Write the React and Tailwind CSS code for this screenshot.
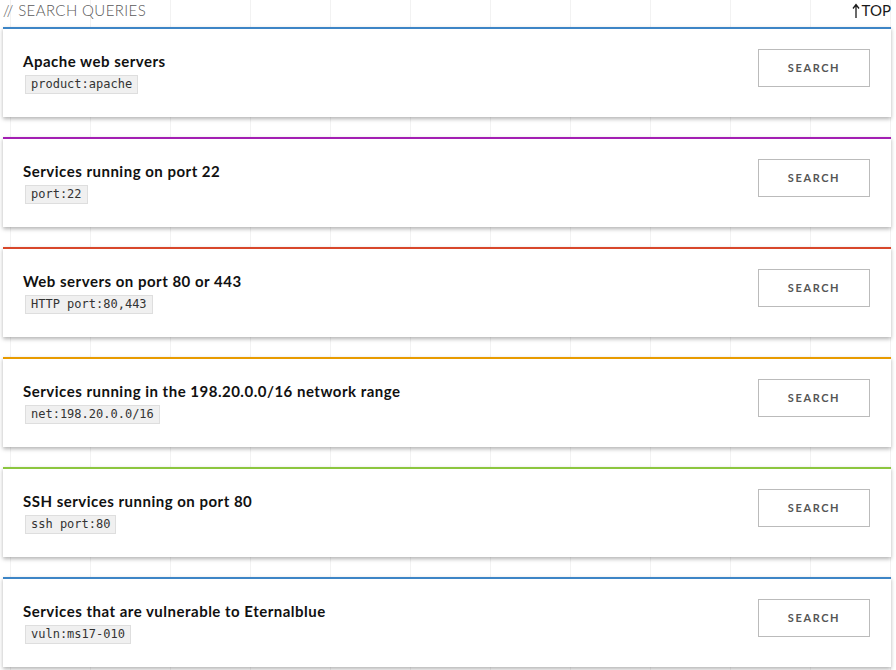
import React from "react";

const items = [
  { title: "Apache web servers", query: "product:apache", color: "border-[#3d85c6]" },
  { title: "Services running on port 22", query: "port:22", color: "border-[#a31fb3]" },
  { title: "Web servers on port 80 or 443", query: "HTTP port:80,443", color: "border-[#d8472b]" },
  { title: "Services running in the 198.20.0.0/16 network range", query: "net:198.20.0.0/16", color: "border-[#e89b00]" },
  { title: "SSH services running on port 80", query: "ssh port:80", color: "border-[#8cc63f]" },
  { title: "Services that are vulnerable to Eternalblue", query: "vuln:ms17-010", color: "border-[#3d85c6]" },
];

export default function App() {
  return (
    <div className="w-[896px] h-[670px] overflow-hidden bg-white bg-[linear-gradient(to_right,#f2f2f2_1px,transparent_1px)] bg-[size:80px_80px] bg-[position:10px_0]">
      <div className="ml-[3px] w-[888px]">
        <div className="h-[27px] flex justify-between items-start font-['Lato',sans-serif] text-[15px] leading-[20px]">
          <span className="font-light text-[#5a5a5a] tracking-[0.4px]">// SEARCH QUERIES</span>
          <span className="text-[#1a1a1a] flex items-center">
            <svg width="8" height="16" viewBox="0 0 8 16" className="mr-[2px] mt-[2px]" aria-hidden="true">
              <path d="M4 15V2M1 5.5L4 1.5L7 5.5" fill="none" stroke="#1a1a1a" strokeWidth="1.3" />
            </svg>
            TOP
          </span>
        </div>
        <div className="flex flex-col gap-[20px]">
          {items.map((it, i) => (
            <div
              key={i}
              className={`h-[90px] bg-white border-t-2 ${it.color} shadow-[0_2px_4px_rgba(0,0,0,0.3)] flex justify-between items-start pl-[20px] pr-[21px]`}
            >
              <div className="pt-[22px] flex flex-col items-start">
                <div className="font-['Lato',sans-serif] font-bold text-[15px] leading-[20px] tracking-[0.5px] text-[#111]">
                  {it.title}
                </div>
                <code className="mt-[4px] ml-[2px] block bg-[#f0f0f0] border border-[#dedede] px-[5px] font-['DejaVu_Sans_Mono',monospace] text-[12px] leading-[17px] text-[#333]">
                  {it.query}
                </code>
              </div>
              <button className="mt-[20px] w-[112px] h-[38px] border border-[#bbbbbb] bg-white font-['Lato',sans-serif] font-bold text-[11px] tracking-[1.6px] text-[#555]">
                SEARCH
              </button>
            </div>
          ))}
        </div>
      </div>
    </div>
  );
}
